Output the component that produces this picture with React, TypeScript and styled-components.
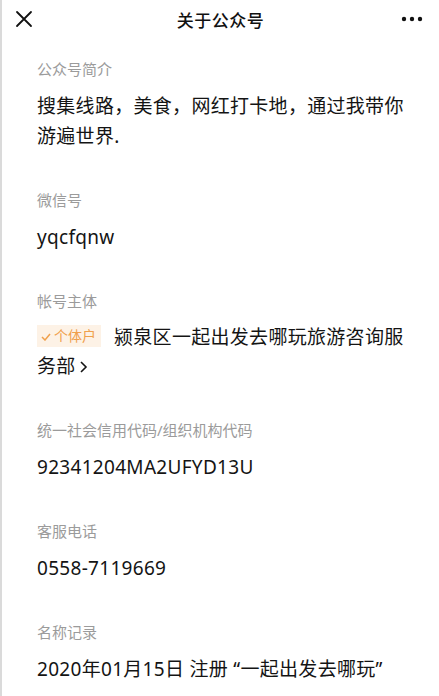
import React from 'react';
import styled, { createGlobalStyle } from 'styled-components';

const GlobalStyle = createGlobalStyle`
  body {
    margin: 0;
    background: #fff;
    font-family: "Noto Sans", "Noto Sans CJK SC", sans-serif;
  }
`;

const Page = styled.div`
  min-height: 696px;
  border-left: 2px solid #dadada;
  background: #fff;
  color: #111;
`;

const TopBar = styled.div`
  height: 38px;
  display: grid;
  grid-template-columns: 1fr auto 1fr;
  align-items: center;

  .left {
    padding-left: 13px;
    display: flex;
  }

  .right {
    padding-right: 16px;
    display: flex;
    justify-content: flex-end;
  }
`;

const Title = styled.div`
  font-size: 17px;
  font-weight: 500;
  letter-spacing: 0.5px;
  color: #111;
`;

const Content = styled.div`
  padding: 21px 20px 0 35px;
`;

const Section = styled.div`
  margin-bottom: 39px;
`;

const Label = styled.div`
  font-size: 15px;
  line-height: 20px;
  color: #9b9b9b;
  margin-bottom: 12px;
`;

const Value = styled.div<{ $tight?: boolean }>`
  font-size: 19px;
  line-height: ${(p) => (p.$tight ? '29px' : '30px')};
  letter-spacing: 0.3px;
  color: #141414;
  word-break: break-all;
`;

const Badge = styled.span`
  display: inline-block;
  height: 22px;
  line-height: 22px;
  padding: 0 5px 0 4px;
  margin-right: 13px;
  background: #fdf2e6;
  color: #f0a04c;
  font-size: 14px;
  letter-spacing: 0;
  vertical-align: 3px;

  svg {
    margin-right: 3px;
    vertical-align: 0;
  }
`;

const Chevron = styled.svg`
  margin-left: 3px;
  vertical-align: -1px;
`;

const CloseIcon = () => (
  <svg width="18" height="18" viewBox="0 0 18 18">
    <path d="M2 2 L16 16 M16 2 L2 16" stroke="#111" strokeWidth="1.8" strokeLinecap="round" />
  </svg>
);

const MoreIcon = () => (
  <svg width="22" height="6" viewBox="0 0 22 6">
    <circle cx="3" cy="3" r="2.2" fill="#111" />
    <circle cx="11" cy="3" r="2.2" fill="#111" />
    <circle cx="19" cy="3" r="2.2" fill="#111" />
  </svg>
);

const sections = [
  { label: '公众号简介', value: '搜集线路，美食，网红打卡地，通过我带你游遍世界.' },
  { label: '微信号', value: 'yqcfqnw' },
  { label: '帐号主体', value: 'subject' },
  { label: '统一社会信用代码/组织机构代码', value: '92341204MA2UFYD13U' },
  { label: '客服电话', value: '0558-7119669' },
  { label: '名称记录', value: '2020年01月15日 注册 “一起出发去哪玩”' },
];

const App = () => {
  return (
    <Page>
      <GlobalStyle />
      <TopBar>
        <div className="left">
          <CloseIcon />
        </div>
        <Title>关于公众号</Title>
        <div className="right">
          <MoreIcon />
        </div>
      </TopBar>
      <Content>
        {sections.map((s) => (
          <Section key={s.label}>
            <Label>{s.label}</Label>
            {s.value === 'subject' ? (
              <Value $tight>
                <Badge>
                  <svg width="10" height="8" viewBox="0 0 10 8">
                    <path d="M1 4 L4 7 L9 1" fill="none" stroke="#f0a04c" strokeWidth="1.5" />
                  </svg>
                  个体户
                </Badge>
                <span>颍泉区一起出发去哪玩旅游咨询服</span>
                <span>务部</span>
                <Chevron width="9" height="14" viewBox="0 0 9 14">
                  <path d="M2 2 L7 7 L2 12" fill="none" stroke="#141414" strokeWidth="1.6" />
                </Chevron>
              </Value>
            ) : (
              <Value>{s.value}</Value>
            )}
          </Section>
        ))}
      </Content>
    </Page>
  );
};

export default App;
